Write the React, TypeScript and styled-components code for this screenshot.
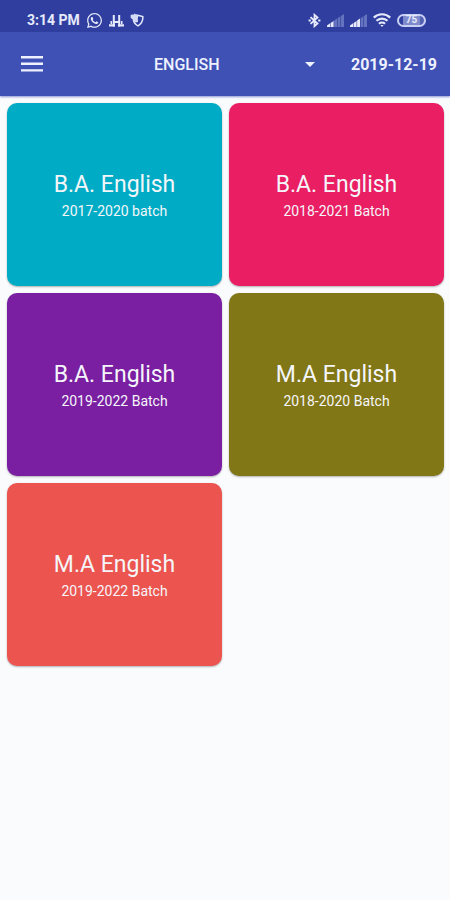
import React, { useState } from "react";
import styled, { createGlobalStyle } from "styled-components";
import { FaWhatsapp } from "react-icons/fa";

const GlobalStyle = createGlobalStyle`
  *, *::before, *::after { box-sizing: border-box; }
  body {
    margin: 0;
    background: #fafbfd;
    font-family: Roboto, "Liberation Sans", sans-serif;
  }
  button, select { font: inherit; color: inherit; }
`;

const Screen = styled.div`
  min-height: 100vh;
  background: #fafbfd;
`;

const StatusBar = styled.div`
  display: flex;
  align-items: center;
  justify-content: space-between;
  height: 32px;
  padding: 8px 24px 0 27px;
  background: #303f9f;
  color: #e6eafb;
`;

const StatusGroup = styled.div`
  display: flex;
  align-items: center;
  gap: 6px;

  svg { display: block; flex: none; }
`;

const Clock = styled.span`
  font-size: 14px;
  line-height: 16px;
  font-weight: 700;
`;

const Battery = styled.span`
  display: flex;
  align-items: center;
  justify-content: center;
  width: 29px;
  height: 13px;
  border: 2px solid #c9d0f3;
  border-radius: 7px;
  background: linear-gradient(90deg, #303f9f 4px, #7f8acb 4px, #7f8acb 21px, #5361b3 21px);
  color: #e6eafb;
  font-size: 10px;
  line-height: 10px;
  font-weight: 700;
`;

const Toolbar = styled.header`
  display: flex;
  align-items: center;
  height: 64px;
  padding: 0 13px 0 20px;
  background: #3f51b5;
  color: #eef1ff;
  box-shadow: 0 1px 2px rgba(63, 81, 181, 0.6);
`;

const MenuButton = styled.button`
  display: grid;
  place-items: center;
  width: 24px;
  height: 24px;
  padding: 0;
  border: 0;
  background: none;
  cursor: pointer;
`;

const Picker = styled.label`
  display: grid;
  align-items: center;
  flex: 1;
  margin: 0 36px 0 110px;

  > * { grid-area: 1 / 1; }

  svg {
    justify-self: end;
    pointer-events: none;
  }
`;

const Select = styled.select`
  width: 100%;
  height: 32px;
  padding: 2px 0 0;
  border: 0;
  appearance: none;
  background: transparent;
  font-size: 16px;
  line-height: 20px;
  font-weight: 500;
  cursor: pointer;

  option { color: #212121; }
`;

const DateButton = styled.button`
  padding: 2px 0 0;
  border: 0;
  background: none;
  font-size: 16px;
  line-height: 20px;
  font-weight: 700;
  white-space: nowrap;
  cursor: pointer;
`;

const Grid = styled.main`
  display: grid;
  grid-template-columns: repeat(2, 1fr);
  gap: 7px;
  padding: 7px 6px 7px 7px;
`;

const Card = styled.button<{ $color: string }>`
  display: flex;
  flex-direction: column;
  align-items: center;
  justify-content: center;
  gap: 2px;
  height: 183px;
  padding: 3px 8px 0;
  border: 0;
  border-radius: 10px;
  background: ${(p) => p.$color};
  color: #f4f6fa;
  box-shadow: 0 1px 2px rgba(0, 0, 0, 0.3);
  cursor: pointer;
`;

const CardTitle = styled.span`
  font-size: 23px;
  line-height: 28px;
`;

const CardBatch = styled.span`
  font-size: 14px;
  line-height: 20px;
`;

const batches = [
  { title: "B.A. English", batch: "2017-2020 batch", color: "#00acc5" },
  { title: "B.A. English", batch: "2018-2021 Batch", color: "#e91e63" },
  { title: "B.A. English", batch: "2019-2022 Batch", color: "#7a1fa2" },
  { title: "M.A English", batch: "2018-2020 Batch", color: "#827717" },
  { title: "M.A English", batch: "2019-2022 Batch", color: "#ec5450" },
];

const signalBars = [
  "M0 13V11.5L3.1 9.300V13z",
  "M3.600 13V9L6.600 7V13z",
  "M7.100 13V6.600L10 4.600V13z",
  "M10.600 13V4.200L13.400 2.300V13z",
  "M14 13V1.900L17 0V13z",
];

function SignalIcon({ bars }: { bars: number }) {
  return (
    <svg width="17" height="13" viewBox="0 0 17 13" aria-hidden="true">
      {signalBars.map((d, i) => (
        <path key={d} d={d} fill={i < bars ? "#e6eafb" : "#6572bd"} />
      ))}
    </svg>
  );
}

function BluetoothIcon() {
  return (
    <svg width="13" height="15" viewBox="0 0 13 15" fill="none" stroke="#e6eafb" strokeWidth="1.8" aria-hidden="true">
      <path d="M2.5 4.2 9.5 10.6 6.5 13.2V1.8L9.5 4.4 2.5 10.8" />
      <path d="M.6 7.5h2.2M10.2 7.5h2.2" strokeWidth="2" />
    </svg>
  );
}

function WifiIcon() {
  return (
    <svg width="18" height="14" viewBox="0 0 18 14" fill="none" stroke="#e6eafb" strokeWidth="2.2" aria-hidden="true">
      <path d="M.8 4.6C5.4.1 12.6.1 17.2 4.6" />
      <path d="M3.5 7.8c3.1-3 7.9-3 11 0" />
      <path d="M6 10.8c1.7-1.6 4.3-1.6 6 0" />
      <path d="M7.4 12h3.2L9 14z" fill="#e6eafb" stroke="none" />
    </svg>
  );
}

function TowersIcon() {
  return (
    <svg width="15" height="13" viewBox="0 0 15 13" fill="none" stroke="#e6eafb" aria-hidden="true">
      <path d="M4.800 1v11.500M10.200 1v11.500" strokeWidth="2" />
      <path d="M4.800 8h5.400" strokeWidth="2" />
      <path d="M2.300 7v3M12.700 7v3" strokeWidth="1.600" />
      <path d="M0 11.300h6M9 11.300h6" strokeWidth="2.200" />
    </svg>
  );
}

function ShieldIcon() {
  return (
    <svg width="14" height="14" viewBox="0 0 14 14" aria-hidden="true">
      <path d="M7.5 2.2 12.8 3.6c.3 4-1.4 7.3-4.8 9.2-2.6-1.3-4.2-3.4-4.7-6.2" fill="none" stroke="#e6eafb" strokeWidth="1.5" />
      <path d="M.5 2.4 2 1.2 3.2 2 4.5.5 6 1.6 7.2 1l1 2-.4 3 .2 3C5 9.800 3.4 9 3 6.8L.8 5z" fill="#d5dbf7" />
    </svg>
  );
}

export default function App() {
  const [subject, setSubject] = useState("ENGLISH");

  return (
    <Screen>
      <GlobalStyle />
      <StatusBar>
        <StatusGroup>
          <Clock>3:14 PM</Clock>
          <FaWhatsapp size={17} aria-hidden="true" />
          <TowersIcon />
          <ShieldIcon />
        </StatusGroup>
        <StatusGroup>
          <BluetoothIcon />
          <SignalIcon bars={2} />
          <SignalIcon bars={3} />
          <WifiIcon />
          <Battery>75</Battery>
        </StatusGroup>
      </StatusBar>
      <Toolbar>
        <MenuButton type="button" aria-label="Open menu">
          <svg width="22" height="16" viewBox="0 0 22 16" fill="#eef1ff" aria-hidden="true">
            <path d="M0 0h22v2.4H0zM0 6.6h22V9H0zM0 13.2h22v2.4H0z" />
          </svg>
        </MenuButton>
        <Picker>
          <Select aria-label="Subject" value={subject} onChange={(e) => setSubject(e.target.value)}>
            <option value="ENGLISH">ENGLISH</option>
          </Select>
          <svg width="10" height="5" viewBox="0 0 10 5" fill="#eef1ff" aria-hidden="true">
            <path d="M0 0h10L5 5z" />
          </svg>
        </Picker>
        <DateButton type="button">
          <time dateTime="2019-12-19">2019-12-19</time>
        </DateButton>
      </Toolbar>
      <Grid>
        {batches.map((b) => (
          <Card key={b.title + b.batch} type="button" $color={b.color}>
            <CardTitle>{b.title}</CardTitle>
            <CardBatch>{b.batch}</CardBatch>
          </Card>
        ))}
      </Grid>
    </Screen>
  );
}
